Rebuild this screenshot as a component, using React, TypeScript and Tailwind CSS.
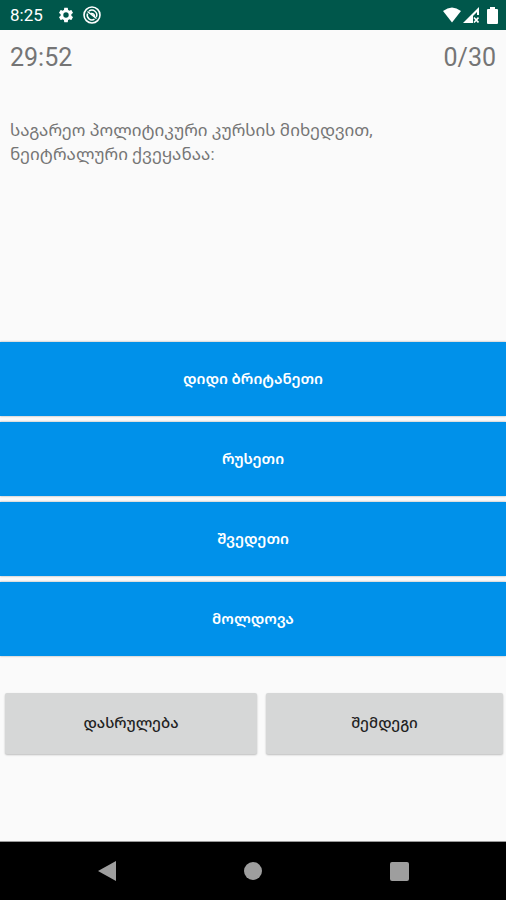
const answers = ["დიდი ბრიტანეთი", "რუსეთი", "შვედეთი", "მოლდოვა"];

function StatusBar() {
  return (
    <header className="flex h-[30px] items-center justify-between bg-[#00574b] pr-2 pl-[10px] text-white">
      <div className="flex items-center gap-3">
        <span className="text-[17px] leading-5">8:25</span>
        <svg className="ml-0.5 size-[18px]" viewBox="0 0 24 24" fill="currentColor" aria-hidden="true">
          <path d="M19.14 12.94c.04-.3.06-.61.06-.94 0-.32-.02-.64-.07-.94l2.03-1.58a.49.49 0 0 0 .12-.61l-1.92-3.32a.49.49 0 0 0-.59-.22l-2.39.96c-.5-.38-1.03-.7-1.62-.94l-.36-2.54a.48.48 0 0 0-.48-.41h-3.84c-.24 0-.43.17-.47.41l-.36 2.54c-.59.24-1.13.57-1.62.94l-2.39-.96a.48.48 0 0 0-.59.22L2.74 8.87a.48.48 0 0 0 .12.61l2.03 1.58c-.05.3-.09.63-.09.94s.02.64.07.94l-2.03 1.58a.49.49 0 0 0-.12.61l1.92 3.32c.12.22.37.29.59.22l2.39-.96c.5.38 1.03.7 1.62.94l.36 2.54c.05.24.24.41.48.41h3.84c.24 0 .44-.17.47-.41l.36-2.54c.59-.24 1.13-.56 1.62-.94l2.39.96c.22.08.47 0 .59-.22l1.92-3.32a.48.48 0 0 0-.12-.61zM12 15.6a3.6 3.6 0 1 1 0-7.2 3.6 3.6 0 0 1 0 7.2z" />
        </svg>
        <svg className="-ml-1 size-[18px]" viewBox="0 0 18 18" fill="none" stroke="currentColor" aria-hidden="true">
          <circle cx="9" cy="9" r="8" strokeWidth="1.6" />
          <path d="M4.500 7.500A4.800 4.800 0 0 0 11.500 13.200M6 5.200A4.800 4.800 0 0 1 13.300 11" strokeWidth="1.5" />
          <path d="M4.500 5.500L13.500 12.500M8 7.500C10 7 11.500 8.500 11.500 10.500" strokeWidth="1.5" />
        </svg>
      </div>
      <div className="flex items-center">
        <svg className="h-4 w-[18px]" viewBox="0 0 18 16" fill="currentColor" aria-hidden="true">
          <path d="M0 4Q9-3 18 4L9 15.500z" />
        </svg>
        <svg className="ml-0.5 h-4 w-4" viewBox="0 0 16 16" fill="currentColor" aria-hidden="true">
          <path d="M0 16L16 0V8H14V5L10 9V16z" />
          <path d="M11 10.500L15.500 15.500M15.500 10.500L11 15.500" stroke="currentColor" strokeWidth="1.6" />
        </svg>
        <svg className="ml-2 h-[17px] w-[11px]" viewBox="0 0 11 17" fill="currentColor" aria-hidden="true">
          <path d="M3 0h5v2h2q1 0 1 1v13q0 1-1 1H1q-1 0-1-1V3q0-1 1-1h2z" />
        </svg>
      </div>
    </header>
  );
}

function NavigationBar() {
  return (
    <nav
      className="flex h-[59px] items-stretch justify-center gap-[98px] border-t border-[#999] bg-black text-[#9e9e9e]"
      aria-label="System"
    >
      <button type="button" aria-label="Back" className="flex w-12 items-center justify-center">
        <svg className="h-5 w-[18px]" viewBox="0 0 18 20" fill="currentColor">
          <path d="M0 10L18 0V20z" />
        </svg>
      </button>
      <button type="button" aria-label="Home" className="flex w-12 items-center justify-center">
        <span className="size-[18px] rounded-full bg-current" />
      </button>
      <button type="button" aria-label="Recent apps" className="flex w-12 items-center justify-center">
        <span className="size-[19px] rounded-xs bg-current" />
      </button>
    </nav>
  );
}

export default function App() {
  return (
    <div className="flex min-h-screen flex-col bg-[#fafafa] font-[Roboto,'Noto_Sans_Georgian','DejaVu_Sans',sans-serif]">
      <StatusBar />
      <main className="flex flex-1 flex-col">
        <div className="flex justify-between px-[10px] pt-3 text-[25px] leading-8 text-[#757575]">
          <time>29:52</time>
          <span>0/30</span>
        </div>
        <p className="mt-11 px-[10px] text-[17px] leading-6 text-[#757575]">
          საგარეო პოლიტიკური კურსის მიხედვით,
          <br />
          ნეიტრალური ქვეყანაა:
        </p>
        <div className="mt-auto flex flex-col gap-1.5">
          {answers.map((answer) => (
            <button
              key={answer}
              type="button"
              className="h-[74px] bg-[#0091ea] text-[15px] font-semibold text-white shadow-[0_0_2px_rgba(0,0,0,0.35)]"
            >
              {answer}
            </button>
          ))}
        </div>
        <div className="mt-[37px] mb-[87px] grid grid-cols-[252fr_237fr] gap-[9px] pr-[3px] pl-[5px] text-[15px] font-medium text-[#222]">
          <button type="button" className="h-[61px] rounded-xs bg-[#d6d7d7] shadow-[0_1px_2px_rgba(0,0,0,0.25)]">
            დასრულება
          </button>
          <button type="button" className="h-[61px] rounded-xs bg-[#d6d7d7] shadow-[0_1px_2px_rgba(0,0,0,0.25)]">
            შემდეგი
          </button>
        </div>
      </main>
      <NavigationBar />
    </div>
  );
}
